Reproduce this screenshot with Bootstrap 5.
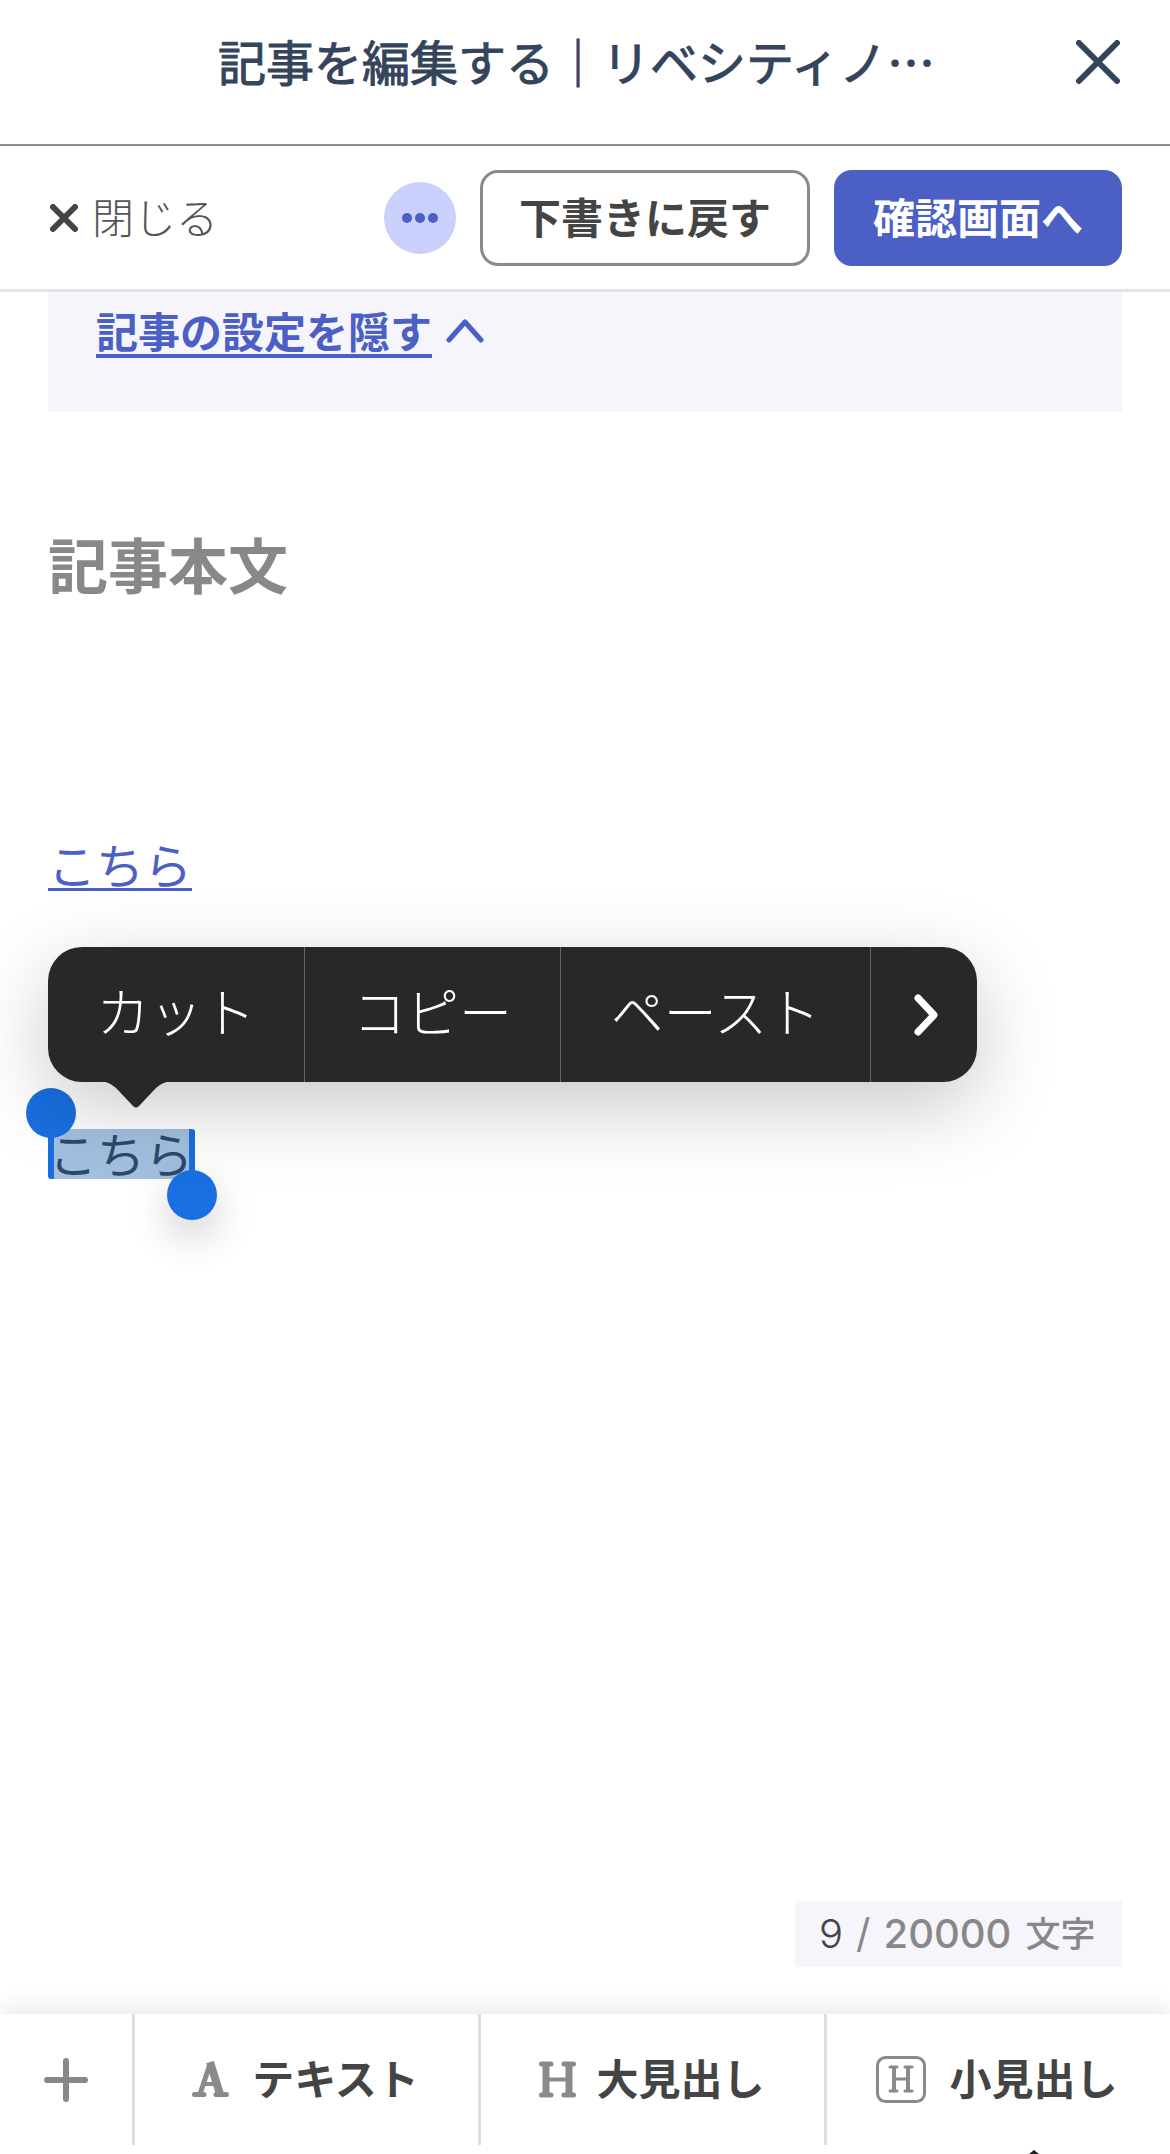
<!DOCTYPE html>
<html lang="ja">
<head>
  <meta charset="UTF-8">
  <meta name="viewport" content="width=device-width, initial-scale=1.0">
  <title>記事を編集する</title>
  <link href="https://cdn.jsdelivr.net/npm/bootstrap@5.3.2/dist/css/bootstrap.min.css" rel="stylesheet">
  <style>
    html, body { height: 2154px; overflow: hidden; }
    body { font-family: "Liberation Sans", "Noto Sans CJK JP", sans-serif; background: #fff; color: #444; }
    .page-wrap { height: 2154px; position: relative; }
    .title-bar { height: 146px; border-bottom: 2px solid #8c8c8c; padding: 0 50px 24px 218px; flex-shrink: 0; }
    .title-text { font-family: "Noto Sans CJK JP", sans-serif; font-size: 48px; font-weight: 400; -webkit-text-stroke: 1px #34445c; color: #34445c; line-height: 1; white-space: nowrap; }
    .title-close { margin-top: 3px; }
    .action-bar { height: 146px; border-bottom: 3px solid #e2e2ea; padding: 0 48px 0 50px; flex-shrink: 0; }
    .close-link { font-size: 42px; color: #555; font-weight: 300; line-height: 1; gap: 14px; }
    .close-link span { padding-top: 5px; }
    .more-btn { width: 72px; height: 72px; border-radius: 50%; background: #c9d0fc; margin-right: 24px; gap: 3px; }
    .more-btn i { width: 10px; height: 10px; border-radius: 50%; background: #4b5fc4; display: block; }
    .btn-back, .btn-next { height: 96px; font-weight: 700; line-height: 1; padding: 5px 0 0; }
    .btn-back { width: 330px; font-size: 42px; border: 3px solid #8a8a8a; border-radius: 18px; color: #444; background: #fff; margin-right: 24px; }
    .btn-next { width: 288px; font-size: 42px; border: 0; border-radius: 18px; color: #fff; background: #4b5fc4; }
    .settings-box { margin: 0 48px; height: 120px; background: #f5f5fb; padding: 21px 48px 0; }
    .settings-link { font-size: 42px; font-weight: 700; color: #4b5fc4; line-height: 1; text-underline-offset: 6px; }
    .settings-chevron { margin: 4px 0 0 14px; }
    .body-heading { font-size: 60px; font-weight: 700; color: #888; line-height: 1; margin: 127px 48px 0; }
    .here-link { display: block; font-size: 48px; color: #4b5fc4; line-height: 1; margin: 245px 48px 0; width: 144px; text-underline-offset: 4px; text-decoration-thickness: 3px; }
    .sel-wrap { position: absolute; left: 48px; top: 1129px; width: 147px; height: 50px; background: #a3c0e0; border-left: 6px solid #1a6fe0; border-right: 6px solid #1a6fe0; border-radius: 3px; }
    .sel-text { font-size: 48px; line-height: 50px; padding-top: 3px; color: #2c4a6e; margin-left: -5px; white-space: nowrap; display: block; }
    .sel-handle { position: absolute; width: 50px; height: 50px; border-radius: 50%; background: #1a6fe0; }
    .handle-a { left: 26px; top: 1088px; }
    .handle-b { left: 167px; top: 1170px; box-shadow: 0 16px 40px rgba(0,0,0,.2); }
    .edit-pop { position: absolute; left: 48px; top: 947px; width: 929px; height: 135px; background: #282828; border-radius: 34px; color: #fff; box-shadow: 0 24px 80px rgba(0,0,0,.22); }
    .edit-pop span { font-size: 53px; line-height: 1; font-weight: 300; height: 100%; border-right: 1px solid #666; }
    .pop-cut { width: 257px; }
    .pop-copy { width: 256px; }
    .pop-paste { width: 310px; }
    .pop-chevron { margin-left: 4px; }
    .pop-arrow { position: absolute; left: 50px; top: 134px; }
    .count-box { position: absolute; right: 48px; top: 1901px; width: 327px; height: 66px; background: #f5f5fb; font-family: Inter, "Noto Sans CJK JP", sans-serif; font-size: 40px; color: #888; line-height: 1; white-space: nowrap; padding-left: 24px; }
    .count-box b { font-weight: 300; color: #444; margin-right: 13px; }
    .count-box i { font-style: normal; font-weight: 400; margin-right: 13px; }
    .count-box u { text-decoration: none; font-weight: 500; margin-right: 14px; }
    .count-box small { font-size: 35px; font-weight: 500; }
    .tool-bar { position: absolute; left: 0; right: 0; top: 2014px; height: 140px; background: #fff; box-shadow: 0 -6px 22px rgba(0,0,0,.09); }
    .tool-item { height: 131px; border-right: 3px solid #ddd; font-size: 42px; font-weight: 700; color: #444; line-height: 1; white-space: nowrap; }
    .tool-plus { width: 135px; }
    .tool-a { width: 346px; padding-right: 2px; gap: 23px; }
    .tool-h { width: 346px; padding-right: 1px; gap: 20px; }
    .tool-s { border-right: 0; flex-grow: 1; padding-right: 3px; gap: 23px; }
    .tool-item span { padding-top: 3px; }
    .caret-tip { position: absolute; left: 1029px; top: 2150px; width: 0; height: 0; border-left: 5px solid transparent; border-right: 5px solid transparent; border-bottom: 4px solid #222; }
  </style>
</head>
<body>
  <div class="page-wrap d-flex flex-column">
    <header class="title-bar d-flex align-items-center">
      <div class="title-text">記事を編集する｜リベシティノ…</div>
      <svg class="title-close ms-auto" width="44" height="44" viewBox="0 0 44 44"><path d="M3 3 41 41M41 3 3 41" stroke="#34445c" stroke-width="6" stroke-linecap="round" fill="none"/></svg>
    </header>

    <div class="action-bar d-flex align-items-center">
      <a class="close-link d-flex align-items-center text-decoration-none" href="#">
        <svg width="28" height="28" viewBox="0 0 28 28"><path d="M3 3 25 25M25 3 3 25" stroke="#444" stroke-width="6" stroke-linecap="round" fill="none"/></svg>
        <span>閉じる</span>
      </a>
      <button class="more-btn ms-auto border-0 p-0 d-flex align-items-center justify-content-center" type="button"><i></i><i></i><i></i></button>
      <button class="btn btn-back" type="button">下書きに戻す</button>
      <button class="btn btn-next" type="button">確認画面へ</button>
    </div>

    <div class="settings-box d-flex align-items-start">
      <a class="settings-link" href="#">記事の設定を隠す</a>
      <svg class="settings-chevron" width="38" height="26" viewBox="0 0 38 26"><path d="M3 23 19 5 35 23" stroke="#4b5fc4" stroke-width="5" stroke-linecap="round" stroke-linejoin="round" fill="none"/></svg>
    </div>

    <h2 class="body-heading">記事本文</h2>
    <a class="here-link" href="#">こちら</a>

    <div class="sel-wrap"><span class="sel-text">こちら</span></div>
    <div class="sel-handle handle-a"></div>
    <div class="sel-handle handle-b"></div>

    <div class="edit-pop d-flex align-items-center">
      <span class="pop-cut d-flex align-items-center justify-content-center">カット</span>
      <span class="pop-copy d-flex align-items-center justify-content-center">コピー</span>
      <span class="pop-paste d-flex align-items-center justify-content-center">ペースト</span>
      <div class="flex-grow-1 d-flex justify-content-center">
        <svg class="pop-chevron" width="26" height="42" viewBox="0 0 26 42"><path d="M5 4 21 21 5 38" stroke="#fff" stroke-width="7" stroke-linecap="round" stroke-linejoin="round" fill="none"/></svg>
      </div>
      <svg class="pop-arrow" width="76" height="28" viewBox="0 0 76 28"><path d="M0 0H76C68 0 62 3 57 8L41 25Q38 28 35 25L19 8C14 3 8 0 0 0Z" fill="#282828"/></svg>
    </div>

    <div class="count-box d-flex align-items-center"><b>9</b><i>/</i><u>20000</u><small>文字</small></div>

    <nav class="tool-bar d-flex">
      <div class="tool-item tool-plus d-flex align-items-center justify-content-center">
        <svg width="44" height="44" viewBox="0 0 44 44"><path d="M22 3V41M3 22H41" stroke="#888" stroke-width="6" stroke-linecap="round" fill="none"/></svg>
      </div>
      <div class="tool-item tool-a d-flex align-items-center justify-content-center">
        <svg width="37" height="37" viewBox="0 0 37 37"><path d="M18 3 8 33" stroke="#8a8a8a" stroke-width="5" fill="none"/><path d="M18 1 28 33" stroke="#8a8a8a" stroke-width="8" fill="none"/><path d="M11 23H26" stroke="#8a8a8a" stroke-width="4" fill="none"/><path d="M2.5 33.5H12M24 33.5H34.5" stroke="#8a8a8a" stroke-width="5" stroke-linecap="round"/></svg>
        <span>テキスト</span>
      </div>
      <div class="tool-item tool-h d-flex align-items-center justify-content-center">
        <svg width="37" height="37" viewBox="0 0 37 37"><path d="M7 3V34M30 3V34" stroke="#8a8a8a" stroke-width="7" fill="none"/><path d="M7 18.5H30" stroke="#8a8a8a" stroke-width="4" fill="none"/><path d="M2.5 3H12M25 3H34.5M2.5 34H12M25 34H34.5" stroke="#8a8a8a" stroke-width="5" stroke-linecap="round"/></svg>
        <span>大見出し</span>
      </div>
      <div class="tool-item tool-s d-flex align-items-center justify-content-center">
        <svg width="50" height="47" viewBox="0 0 50 47"><rect x="1.5" y="1.5" width="47" height="44" rx="8" stroke="#8a8a8a" stroke-width="3" fill="none"/><path d="M18 11V35M32 11V35" stroke="#8a8a8a" stroke-width="4" fill="none"/><path d="M18 23H32" stroke="#8a8a8a" stroke-width="3" fill="none"/><path d="M14 11H21M29 11H36M14 35H21M29 35H36" stroke="#8a8a8a" stroke-width="3" stroke-linecap="round"/></svg>
        <span>小見出し</span>
      </div>
    </nav>
    <div class="caret-tip"></div>
  </div>
  <script src="https://cdn.jsdelivr.net/npm/bootstrap@5.3.2/dist/js/bootstrap.bundle.min.js"></script>
</body>
</html>
